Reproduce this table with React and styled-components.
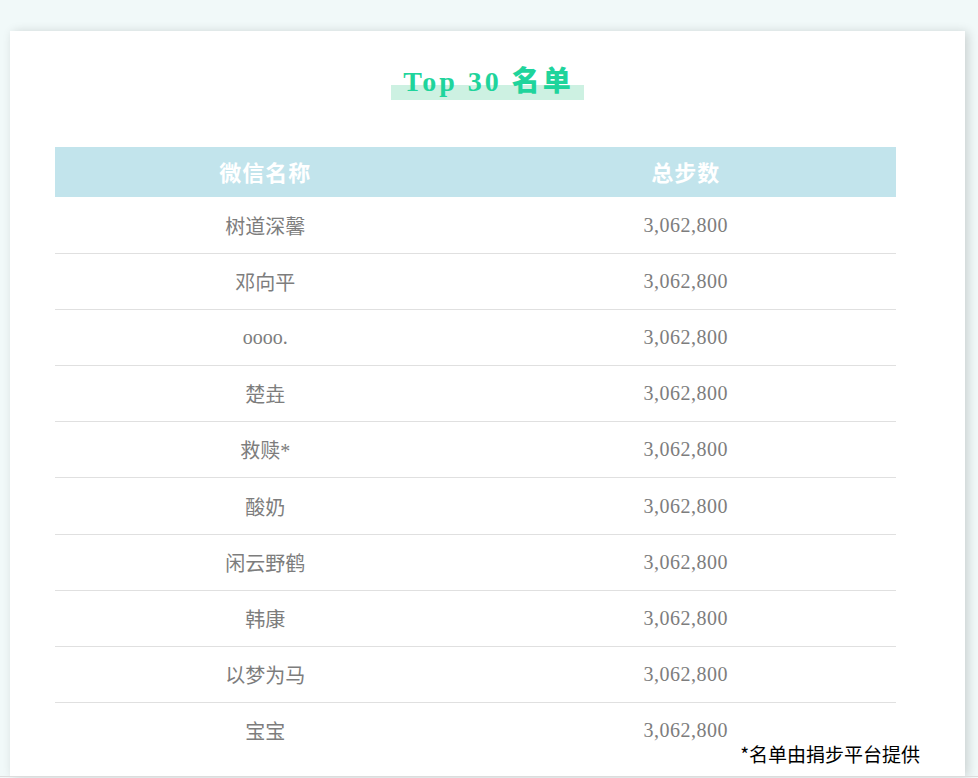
import React from "react";
import styled, { createGlobalStyle } from "styled-components";

const Global = createGlobalStyle`
  html, body { margin: 0; padding: 0; background: #f1f9f9; }
  body { font-family: "Noto Sans CJK SC", "Noto Sans", sans-serif; overflow: hidden; }
`;

const Page = styled.div`
  padding: 31px 13px 0 10px;
  height: 778px;
  box-sizing: border-box;
`;

const Card = styled.div`
  background: #fff;
  height: 745px;
  box-sizing: border-box;
  padding: 33px 45px 0;
  box-shadow: 3px 1px 10px rgba(0, 0, 0, 0.16);
`;

const TitleRow = styled.div`
  text-align: center;
  height: 36px;
`;

const Title = styled.h1`
  display: inline-block;
  margin: 0;
  padding: 0 10px 0 12px;
  height: 36px;
  line-height: 31px;
  font-size: 28px;
  letter-spacing: 3px;
  color: #1fd49c;
  font-weight: bold;
  background: linear-gradient(to bottom, transparent 21px, #cdf1e2 21px);
`;

const Latin = styled.span`
  font-family: "Liberation Serif", serif;
`;

const Cjk = styled.span`
  font-family: "Noto Sans CJK SC", sans-serif;
  font-weight: 900;
`;

const Table = styled.div`
  width: 841px;
  margin-top: 47px;
`;

const HeadRow = styled.div`
  display: grid;
  grid-template-columns: 1fr 1fr;
  height: 50px;
  margin-bottom: 1px;
  background: #c2e4ec;
  align-items: center;
`;

const HeadCell = styled.div`
  text-align: center;
  color: #fff;
  font-family: "Noto Sans CJK SC", sans-serif;
  font-weight: bold;
  font-size: 22px;
  line-height: 22px;
  letter-spacing: 1px;
  padding-bottom: 2px;
`;

const Row = styled.div`
  display: grid;
  grid-template-columns: 1fr 1fr;
  height: 56.1px;
  box-sizing: border-box;
  align-items: center;
  border-bottom: ${(p) => (p.$last ? "none" : "1px solid #e0e0e0")};
`;

const Cell = styled.div`
  text-align: center;
  color: #7d7d7d;
  font-family: "Liberation Serif", "Noto Sans CJK SC", serif;
  font-size: 20px;
  letter-spacing: ${(p) => (p.$num ? "0.5px" : "0")};
`;

const Footnote = styled.div`
  margin-top: -16px;
  text-align: right;
  font-family: "Noto Sans CJK SC", sans-serif;
  font-size: 19px;
  line-height: 22px;
  color: #000;
`;

const BottomLine = styled.div`
  height: 1px;
  background: #dcdcdc;
  margin: 0 -13px 0 -10px;
`;

const rows = [
  "树道深馨",
  "邓向平",
  "oooo.",
  "楚垚",
  "救赎*",
  "酸奶",
  "闲云野鹤",
  "韩康",
  "以梦为马",
  "宝宝",
];

export default function App() {
  return (
    <>
      <Global />
      <Page>
        <Card>
          <TitleRow>
            <Title>
              <Latin>Top 30 </Latin>
              <Cjk>名单</Cjk>
            </Title>
          </TitleRow>
          <Table>
            <HeadRow>
              <HeadCell>微信名称</HeadCell>
              <HeadCell>总步数</HeadCell>
            </HeadRow>
            {rows.map((name, i) => (
              <Row key={i} $last={i === rows.length - 1}>
                <Cell>{name}</Cell>
                <Cell $num>3,062,800</Cell>
              </Row>
            ))}
          </Table>
          <Footnote>*名单由捐步平台提供</Footnote>
        </Card>
        <BottomLine />
      </Page>
    </>
  );
}
